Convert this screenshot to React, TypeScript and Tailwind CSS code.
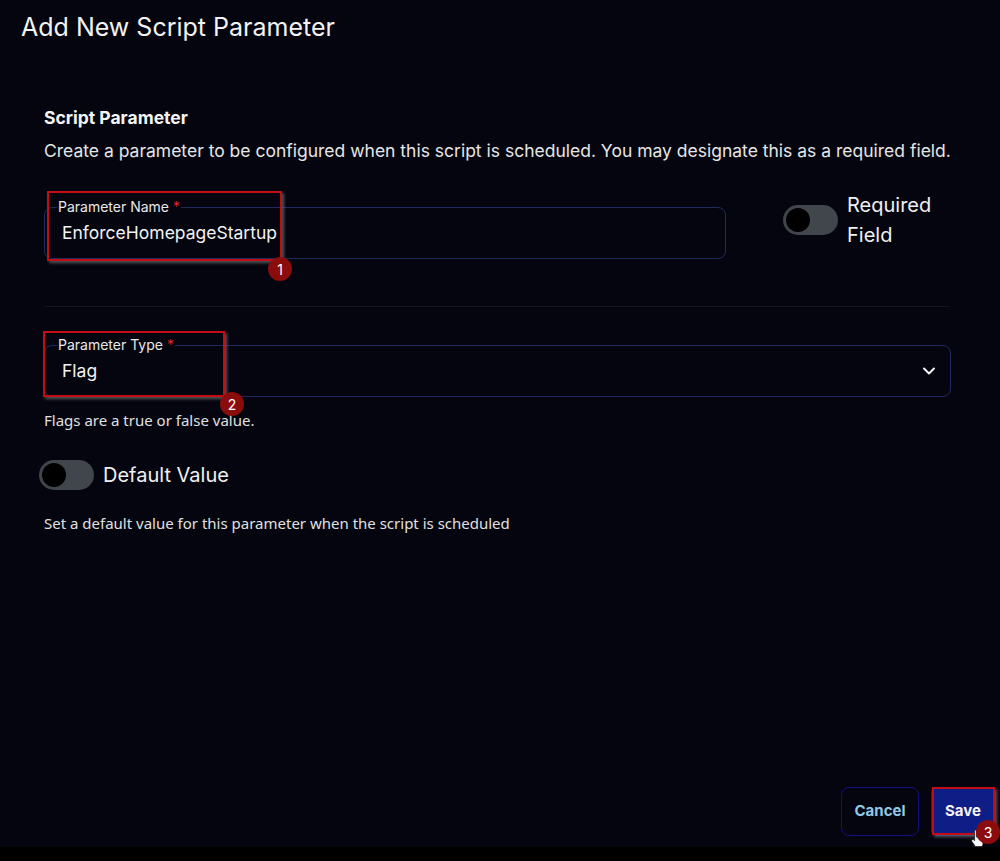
import React from "react";

function Toggle() {
  return (
    <div className="relative h-[30px] w-[55px] shrink-0 rounded-full bg-[#40464b]">
      <div className="absolute left-[3px] top-[3px] h-[24px] w-[24px] rounded-full bg-black" />
    </div>
  );
}

function Badge({ n, className }: { n: string; className: string }) {
  return (
    <div
      className={
        "absolute flex h-[24px] w-[24px] items-center justify-center rounded-full bg-[#8b0c0c] text-[14px] text-white " +
        className
      }
      style={{ fontFamily: "Inter, sans-serif" }}
    >
      {n}
    </div>
  );
}

function Annot({ className }: { className: string }) {
  return (
    <div
      className={
        "pointer-events-none absolute border-2 border-[#c40d12] shadow-[2px_2px_3px_rgba(120,120,120,0.7)] " +
        className
      }
    />
  );
}

export default function App() {
  return (
    <div
      className="flex h-[861px] w-[1000px] flex-col bg-black text-white"
      style={{ fontFamily: "Inter, 'Noto Sans', sans-serif" }}
    >
      <div className="relative flex h-[847px] flex-col bg-[#05050f]">
        <h1 className="pl-[21px] pt-[12px] text-[25px] leading-[30px] font-normal text-[#f2f2f2]">
          Add New Script Parameter
        </h1>

        <div className="px-[44px] pt-[65px]">
          <div className="text-[17.5px] font-bold leading-[22px] text-[#f4f4f4]">Script Parameter</div>
          <div className="mt-[11px] whitespace-nowrap text-[17.5px] leading-[22px] text-[#e6e6e6]">
            Create a parameter to be configured when this script is scheduled. You may designate this as a required field.
          </div>

          <div className="mt-[45px] flex items-start gap-[57px]">
            <fieldset className="relative -mt-[9px] h-[61px] w-[682px] rounded-[8px] border border-[#1f2b5e] px-[12px]">
              <legend className="px-[1px] text-[14px] leading-[18px] text-[#e8e8e8]">
                Parameter Name <span className="text-[#e0242b]">*</span>
              </legend>
              <div className="pl-[5px] pt-[6px] text-[17.5px] leading-[22px] text-[#f2f2f2]">EnforceHomepageStartup</div>
            </fieldset>
            <div className="-mt-[17px] flex items-start gap-[9px]">
              <div className="pt-[15px]">
                <Toggle />
              </div>
              <div className="text-[20px] leading-[30px] text-[#f0f0f0]">
                Required
                <br />
                Field
              </div>
            </div>
          </div>

          <div className="mt-[47px] h-px w-[906px] bg-[#14141f]" />

          <fieldset className="mt-[29px] h-[61px] w-[907px] rounded-[8px] border border-[#1f2b5e] px-[12px]">
            <legend className="px-[1px] text-[14px] leading-[18px] text-[#e8e8e8]">
              Parameter Type <span className="text-[#e0242b]">*</span>
            </legend>
            <div className="flex items-center justify-between pl-[5px] pr-[2px] pt-[6px]">
              <span className="text-[17.5px] leading-[22px] text-[#f2f2f2]">Flag</span>
              <svg width="14" height="10" viewBox="0 0 14 10" fill="none">
                <path d="M2 2.5 L7 7.5 L12 2.5" stroke="#f2f2f2" strokeWidth="2" strokeLinecap="round" strokeLinejoin="round" />
              </svg>
            </div>
          </fieldset>

          <div
            className="mt-[13px] text-[15px] leading-[20px] text-[#e0e0e0]"
            style={{ fontFamily: "'Noto Sans', sans-serif" }}
          >
            Flags are a true or false value.
          </div>

          <div className="-ml-[5px] mt-[30px] flex items-center gap-[9px]">
            <Toggle />
            <span className="text-[20px] leading-[28px] text-[#f0f0f0]">Default Value</span>
          </div>

          <div
            className="mt-[23px] text-[15px] leading-[20px] text-[#e0e0e0]"
            style={{ fontFamily: "'Noto Sans', sans-serif" }}
          >
            Set a default value for this parameter when the script is scheduled
          </div>
        </div>

        <div className="mt-auto flex justify-end gap-[12px] pb-[11px] pr-[5px]">
          <button className="h-[49px] w-[78px] rounded-[8px] border border-[#0e1180] text-[15px] font-bold text-[#8fc9e6]">
            Cancel
          </button>
          <button className="h-[49px] w-[64px] rounded-[6px] bg-[#0e1e86] text-[15px] font-bold text-[#f4f4f4]">
            Save
          </button>
        </div>

        <Annot className="left-[47px] top-[191px] h-[70px] w-[235px]" />
        <Badge n="1" className="left-[268px] top-[257px]" />
        <Annot className="left-[43px] top-[331px] h-[66px] w-[182px]" />
        <Badge n="2" className="left-[220px] top-[392px]" />
        <Annot className="left-[932px] top-[787px] h-[48px] w-[63px]" />
        <div className="absolute left-[970px] top-[828px]">
          <svg width="16" height="20" viewBox="0 0 16 20">
            <path
              d="M5 1.5c.8 0 1.4.6 1.4 1.4V9l.6-.1c.7-.2 1.4.1 1.7.7.7-.3 1.5 0 1.8.6.8-.3 1.6.2 1.8 1l.6 3.5c.2 1.4-.2 2.7-1 3.8H5.3L2 13.6c-.5-.6-.4-1.5.2-1.9.5-.4 1.3-.3 1.7.2l.7.8V2.9c0-.8.6-1.4 1.4-1.4z"
              fill="#ffffff"
              stroke="#222"
              strokeWidth="0.8"
            />
          </svg>
        </div>
        <Badge n="3" className="left-[976px] top-[820px]" />
      </div>
    </div>
  );
}
